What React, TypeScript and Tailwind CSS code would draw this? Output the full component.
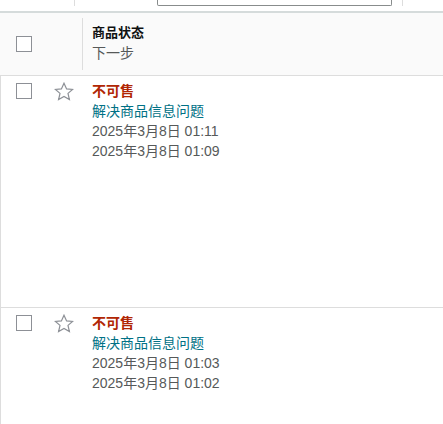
import React from 'react'

const font = { fontFamily: '"Liberation Sans", "Noto Sans CJK SC", sans-serif' }

function Checkbox() {
  return <div className="w-4 h-4 border border-[#8d9096] bg-white shrink-0" />
}

function StarIcon() {
  return (
    <svg width="20" height="19" viewBox="0 0 20 19" className="shrink-0">
      <polygon
        points="10,1.2 12.6,6.9 18.6,7.4 14,11.4 15.4,17.6 10,14.4 4.6,17.6 6,11.4 1.4,7.4 7.4,6.9"
        fill="none"
        stroke="#8d9096"
        strokeWidth="1.2"
        strokeLinejoin="miter"
      />
    </svg>
  )
}

interface Listing {
  status: string
  action: string
  updated: string
  created: string
}

const listings: Listing[] = [
  { status: '不可售', action: '解决商品信息问题', updated: '2025年3月8日 01:11', created: '2025年3月8日 01:09' },
  { status: '不可售', action: '解决商品信息问题', updated: '2025年3月8日 01:03', created: '2025年3月8日 01:02' },
]

function ListingRow({ item }: { item: Listing }) {
  return (
    <div className="flex h-[232px] border-b border-[#dddddd] last:border-b-0">
      <div className="pl-[15px] pt-[7px] w-[53px]">
        <Checkbox />
      </div>
      <div className="pt-[6px] w-[38px]">
        <StarIcon />
      </div>
      <div className="pt-[5px] text-[14px] leading-5">
        <div className="font-bold text-[#b12704]">{item.status}</div>
        <div className="text-[#007185]">{item.action}</div>
        <div className="text-[#565959]">{item.updated}</div>
        <div className="text-[#565959]">{item.created}</div>
      </div>
    </div>
  )
}

export default function App() {
  return (
    <div className="w-[443px] h-[424px] overflow-hidden bg-white" style={font}>
      {/* filter strip */}
      <div className="flex h-[11px]">
        <div className="w-[75px] h-[6px] border-r border-[#dddddd]" />
        <div className="w-[82px]" />
        <div className="w-[235px] h-[6px] border-x border-b border-[#888c8c] rounded-b-[2px]" />
        <div className="w-[10px]" />
        <div className="h-[6px] border-l border-[#dddddd]" />
      </div>

      {/* header */}
      <div className="flex items-center h-[65px] border-t-2 border-b border-t-[#d5dbdb] border-b-[#dddddd] bg-[#fafafa]">
        <div className="pl-4 w-[82px]">
          <Checkbox />
        </div>
        <div className="w-px h-[52px] bg-[#dddddd]" />
        <div className="pl-[9px] leading-5 -mt-[2px]">
          <div className="text-[13px] font-bold text-[#0f1111]">商品状态</div>
          <div className="text-[14px] text-[#565959]">下一步</div>
        </div>
      </div>

      {/* rows */}
      <div className="border-l border-[#dddddd]">
        {listings.map((item, i) => (
          <ListingRow key={i} item={item} />
        ))}
      </div>
    </div>
  )
}
